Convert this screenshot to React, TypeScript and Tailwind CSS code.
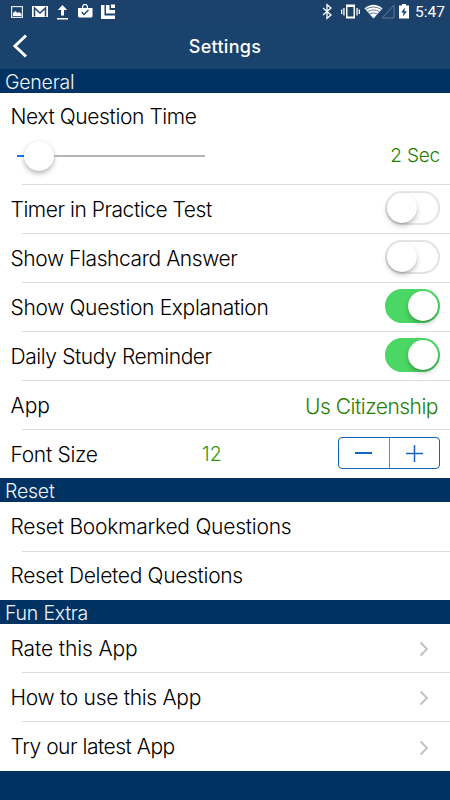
import { ReactNode, useState } from "react";
import clsx from "clsx";

function StatusBar() {
  return (
    <div className="h-[23px] bg-[#1c426c] flex items-center justify-between pl-[11px] pr-[6px] shrink-0">
      <svg width="105" height="23" viewBox="0 0 105 23" fill="#fff">
        <rect x="0.6" y="6.6" width="10.8" height="10.8" fill="none" stroke="#dfe7ef" strokeWidth="1.2" />
        <path d="M2 16v-3l2.500-2 2 2 1.500-1 2.500 2v2z" />
        <path d="M21 6h16v11H21z" />
        <path d="M23.500 16.500V8l5.500 5 5.500-5v8.500" fill="none" stroke="#1c426c" strokeWidth="1.500" />
        <path d="M51.500 5l4.700 5H53v5.500h-3V10h-3.200zM46 18h11v1.500H46z" />
        <path fillRule="evenodd" d="M67 8h4V6l1.500-2h3L77 6v2h4.500v8.500l-1 1H68l-1-1zM72.300 8h3.400V6l-.7-.8h-2l-.7.800zM70.300 12.500l2.700 3 5-5-1-1-4 4-1.700-2z" />
        <path d="M90 5h3.500v10.500H104V19H90zM95 5h3.500v5H104v3.500h-9zM100 4.500h4V8h-4z" />
      </svg>
      <div className="flex items-center">
        <svg width="92" height="23" viewBox="0 0 92 23" fill="#fff" className="mr-[2px]">
          <path d="M2 8l8 7-4 3.300V4.700L10 8l-8 7" fill="none" stroke="#fff" strokeWidth="1.300" />
          <path fillRule="evenodd" d="M25 4.500h9v14h-9zM26.500 7v9.500h6V7zM22.300 8h1.300v7.500h-1.300zM35.400 8h1.300v7.500h-1.300zM20 9.500h1.300V14H20zM37.700 9.500H39V14h-1.300z" />
          <path d="M43.500 8.500Q52.500 1 61.500 8.500L52.500 18.500z" />
          <path d="M44.500 9.500q8-5 16 0M46.500 11.700q6-3.500 12 0M48.500 13.900q4-2 8 0" fill="none" stroke="#1c426c" strokeWidth=".7" />
          <path d="M61.500 18L73 5v13z" fill="none" stroke="#7890a8" strokeWidth=".7" />
          <path fillRule="evenodd" d="M78 5.500h3V4h4v1.500h3v13H78zM83.800 7.500l-3.600 5h2.300l-.6 4 4-5.200h-2.500z" />
        </svg>
        <span className="w-[29px] text-right font-['Roboto'] font-normal text-[15.500px] leading-[23px] text-white pt-[2px]">
          5:47
        </span>
      </div>
    </div>
  );
}

function SectionTitle({ children }: { children: ReactNode }) {
  return (
    <div className="h-6 shrink-0 bg-[#003264] text-[#f0f4fa] font-light text-[19.500px] tracking-[-0.220px] leading-6 pl-[5px] pt-px">
      {children}
    </div>
  );
}

type RowProps = {
  label: string;
  labelClass?: string;
  className?: string;
  last?: boolean;
  children?: ReactNode;
};

function Row({ label, labelClass, className = "h-[49px]", last, children }: RowProps) {
  return (
    <div className={clsx("shrink-0 flex flex-col", className)}>
      <div className="flex-1 flex items-center justify-between pl-[10.500px] pr-[10px]">
        <span className={clsx("text-[21px] leading-6 whitespace-nowrap pt-[2px]", labelClass)}>{label}</span>
        {children}
      </div>
      {!last && <div className="h-px ml-[22px] bg-[#dcdcde]" />}
    </div>
  );
}

function Toggle({ initial }: { initial: boolean }) {
  const [on, setOn] = useState(initial);

  return (
    <button
      role="switch"
      aria-checked={on}
      onClick={() => setOn(!on)}
      className={clsx(
        "w-[55px] h-[34px] rounded-full border-2 flex items-center mt-[-3px]",
        on ? "bg-[#4bd763] border-[#4bd763] justify-end" : "bg-white border-[#e4e4e4]"
      )}
    >
      <span className="size-[30px] rounded-full bg-white shadow-[0_3px_5px_rgba(0,0,0,0.22),0_1px_1px_rgba(0,0,0,0.12)]" />
    </button>
  );
}

function Chevron() {
  return (
    <svg width="10" height="16" viewBox="0 0 10 16" className="mr-[11px] mt-[2px]">
      <path d="M1.500 1.500L8 8l-6.500 6.500" fill="none" stroke="#c2c2c6" strokeWidth="2" />
    </svg>
  );
}

export default function App() {
  const [fontSize, setFontSize] = useState(12);

  return (
    <main className="w-[450px] h-[800px] overflow-hidden flex flex-col bg-white text-black font-['Inter',sans-serif] font-light">
      <StatusBar />
      <header className="h-[46px] shrink-0 bg-[#19426c] grid grid-cols-3 items-center">
        <button className="pl-[12px]">
          <svg width="16" height="24" viewBox="0 0 16 24">
            <path d="M14 1.500L3 12l11 10.500" fill="none" stroke="#fff" strokeWidth="3" />
          </svg>
        </button>
        <h1 className="text-center text-white font-medium text-[18px] tracking-[0.300px]">Settings</h1>
      </header>

      <SectionTitle>General</SectionTitle>
      <div className="h-[92px] shrink-0 flex flex-col">
        <div className="flex-1 pl-[10.500px] pr-[10px] pt-[12px]">
          <div className="text-[21px] leading-6 tracking-[-0.400px]">Next Question Time</div>
          <div className="flex items-center justify-between mt-[11px]">
            <div className="ml-[6px] w-[188px] h-[31px] flex items-center">
              <div className="w-[7px] h-[2px] bg-[#1478e6]" />
              <div className="size-[30px] rounded-full bg-white shadow-[0_3px_5px_rgba(0,0,0,0.25),0_0_2px_rgba(0,0,0,0.12)]" />
              <div className="flex-1 h-[2px] bg-[#b5b5b7]" />
            </div>
            <span className="text-[19px] tracking-[-0.200px] text-[#1f8000] pt-px">2 Sec</span>
          </div>
        </div>
        <div className="h-px ml-[22px] bg-[#dcdcde]" />
      </div>
      <Row label="Timer in Practice Test" labelClass="tracking-[-0.460px]">
        <Toggle initial={false} />
      </Row>
      <Row label="Show Flashcard Answer" labelClass="tracking-[-0.420px]">
        <Toggle initial={false} />
      </Row>
      <Row label="Show Question Explanation" labelClass="tracking-[-0.340px]">
        <Toggle initial={true} />
      </Row>
      <Row label="Daily Study Reminder" labelClass="tracking-[-0.410px]">
        <Toggle initial={true} />
      </Row>
      <Row label="App">
        <span className="text-[21px] leading-6 tracking-[-0.500px] text-[#1f8000] mr-[2px] pt-[3px]">
          Us Citizenship
        </span>
      </Row>
      <Row label="Font Size" labelClass="tracking-[-0.300px]" className="h-12" last>
        <div className="flex items-center">
          <span className="w-[136px] text-[19.500px] text-[#2f9a10] pt-px">{fontSize}</span>
          <div className="w-[102px] h-[32px] rounded-[4px] border border-[#1464b4] flex mt-[-2px]">
            <button
              className="flex-1 flex items-center justify-center border-r border-[#5090d0]"
              onClick={() => setFontSize(fontSize - 1)}
            >
              <span className="w-[17px] h-[1.500px] bg-[#1464c4]" />
            </button>
            <button className="flex-1 flex items-center justify-center" onClick={() => setFontSize(fontSize + 1)}>
              <svg width="17" height="17" viewBox="0 0 17 17">
                <path d="M0 8.500h17M8.500 0v17" stroke="#1464c4" strokeWidth="1.500" />
              </svg>
            </button>
          </div>
        </div>
      </Row>

      <SectionTitle>Reset</SectionTitle>
      <Row label="Reset Bookmarked Questions" labelClass="tracking-[-0.240px] pt-0!" className="h-[50px]" />
      <Row label="Reset Deleted Questions" labelClass="tracking-[-0.320px] pt-0!" className="h-12" last />

      <SectionTitle>Fun Extra</SectionTitle>
      <Row label="Rate this App" labelClass="tracking-[-0.120px]">
        <Chevron />
      </Row>
      <Row label="How to use this App" labelClass="tracking-[-0.290px]">
        <Chevron />
      </Row>
      <Row label="Try our latest App" labelClass="tracking-[-0.490px] pt-0!" last>
        <Chevron />
      </Row>
      <footer className="flex-1 bg-[#003264]" />
    </main>
  );
}
